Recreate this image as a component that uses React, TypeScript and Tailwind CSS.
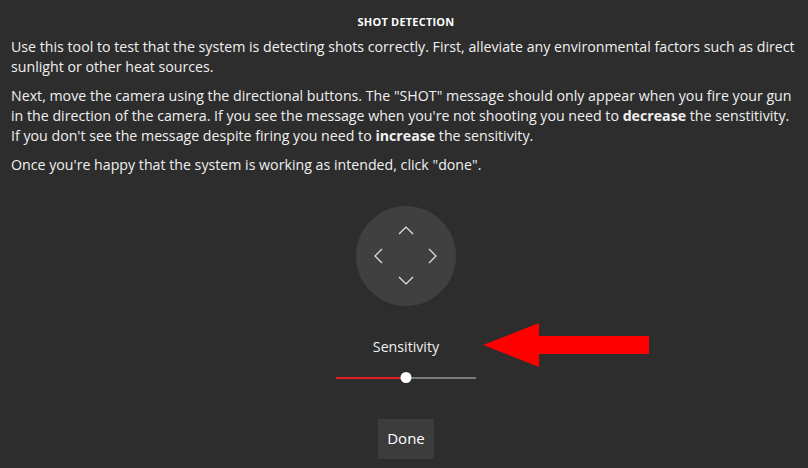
import { useState } from "react";

function Chevron({ d }: { d: string }) {
    return (
        <svg width="16" height="16" viewBox="0 0 16 16" fill="none" stroke="#e6e6e6" strokeWidth="1.2">
            <path d={d} />
        </svg>
    );
}

export default function App() {
    const [value] = useState(50);

    return (
        <div
            className="w-[808px] h-[468px] bg-[#2d2d2d] text-[#f0f0f0] flex flex-col overflow-hidden"
            style={{ fontFamily: '"Open Sans", "Noto Sans", sans-serif' }}
        >
            {/* タイトル */}
            <h1 className="text-center text-[11px] font-bold tracking-[0.2px] pt-[14px] pl-[4px] text-white">
                SHOT DETECTION
            </h1>

            {/* 説明文 */}
            <div className="px-[11px] pt-[6px] text-[14.2px] leading-[20px] flex flex-col gap-[9px] whitespace-nowrap">
                <p>
                    Use this tool to test that the system is detecting shots correctly. First, alleviate any environmental factors such as direct
                    <br />
                    sunlight or other heat sources.
                </p>
                <p>
                    Next, move the camera using the directional buttons. The "SHOT" message should only appear when you fire your gun
                    <br />
                    in the direction of the camera. If you see the message when you're not shooting you need to <b>decrease</b> the senstitivity.
                    <br />
                    If you don't see the message despite firing you need to <b>increase</b> the sensitivity.
                </p>
                <p>Once you're happy that the system is working as intended, click "done".</p>
            </div>

            {/* 方向パッド */}
            <div className="flex justify-center pt-[31px] pl-[4px]">
                <div className="relative w-[100px] h-[100px] rounded-full bg-[#404040]">
                    <button className="absolute left-[42px] top-[17px]">
                        <Chevron d="M1 11 L8 4 L15 11" />
                    </button>
                    <button className="absolute left-[42px] top-[66px]">
                        <Chevron d="M1 5 L8 12 L15 5" />
                    </button>
                    <button className="absolute left-[15px] top-[42px]">
                        <Chevron d="M11 1 L4 8 L11 15" />
                    </button>
                    <button className="absolute left-[68px] top-[42px]">
                        <Chevron d="M5 1 L12 8 L5 15" />
                    </button>
                </div>
            </div>

            {/* 感度 */}
            <div className="flex flex-col items-center pt-[28px] pl-[4px]">
                <div className="relative">
                    <span className="text-[14.2px]">Sensitivity</span>
                    <svg
                        className="absolute left-[110px] top-[-11px]"
                        width="172"
                        height="44"
                        viewBox="0 0 172 44"
                    >
                        <polygon points="0,22 56,0 56,13 166,13 166,31 56,31 56,44" fill="#ff0000" />
                    </svg>
                </div>
                <div className="relative w-[140px] h-[14px] mt-[13px]">
                    <div className="absolute left-0 right-0 top-[6px] h-[2px] bg-[#7a7a7a]" />
                    <div
                        className="absolute left-0 top-[6px] h-[2px] bg-[#e01e1e]"
                        style={{ width: `${value}%` }}
                    />
                    <div
                        className="absolute top-[1px] w-[11px] h-[11px] rounded-full bg-white -translate-x-1/2"
                        style={{ left: `${value}%` }}
                    />
                </div>
            </div>

            {/* 完了ボタン */}
            <div className="flex justify-center pt-[34px] pl-[4px]">
                <button className="w-[56px] h-[40px] bg-[#3c3c3c] text-[15px] text-white">Done</button>
            </div>
        </div>
    );
}
